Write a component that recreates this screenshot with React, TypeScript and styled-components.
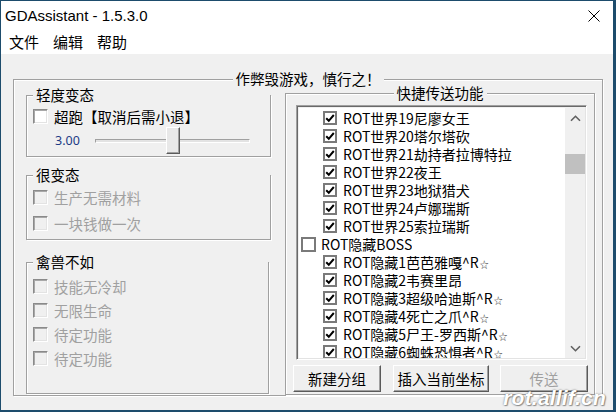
import React from 'react';
import styled, { createGlobalStyle } from 'styled-components';

const Global = createGlobalStyle`
  html, body { margin: 0; padding: 0; background: #1d4c6c; }
  body {
    width: 616px; height: 412px; overflow: hidden;
    font-family: "Noto Sans CJK SC", "Noto Sans", sans-serif;
    -webkit-font-smoothing: antialiased;
  }
  * { box-sizing: border-box; }
`;

const Frame = styled.div`
  position: relative;
  width: 616px;
  height: 412px;
  padding: 1px 3px 2px 1px;
  background: #1d4c6c;
  display: flex;
`;

const Win = styled.div`
  flex: 1;
  display: flex;
  flex-direction: column;
  background: #f0f0f0;
`;

const TitleBar = styled.div`
  height: 29px;
  background: #fff;
  display: flex;
  align-items: center;
  padding-left: 4px;
  font-family: "Liberation Sans", "Noto Sans", sans-serif;
  font-size: 15px;
  color: #000;
`;

const TitleText = styled.span`
  flex: 1;
`;

const CloseIcon = styled.svg`
  width: 12px;
  height: 12px;
  margin-right: 13px;
`;

const MenuBar = styled.div`
  height: 24px;
  background: #fff;
  display: flex;
  align-items: center;
  padding-left: 1px;
`;

const MenuItem = styled.span`
  padding: 0 7px;
  font-size: 15px;
  line-height: 24px;
  color: #000;
`;

const Client = styled.div`
  flex: 1;
  padding: 25px 0 0 12px;
`;

const Group = styled.div<{ $w: number; $h: number; $mt?: number }>`
  width: ${p => p.$w}px;
  height: ${p => p.$h}px;
  margin-top: ${p => p.$mt ?? 0}px;
  border: 1px solid #a0a0a0;
  box-shadow: 1px 1px 0 #fff, inset 1px 1px 0 #fff;
  display: flex;
  flex-direction: column;
  flex: none;
`;

const Legend = styled.div<{ $center?: boolean }>`
  margin-top: -10px;
  margin-left: ${p => (p.$center ? 'auto' : '6px')};
  margin-right: ${p => (p.$center ? 'auto' : '0')};
  padding: 0 3px;
  height: 18px;
  line-height: 18px;
  font-size: 14.5px;
  background: #f0f0f0;
  color: #000;
  white-space: nowrap;
`;

const OuterRow = styled.div`
  display: flex;
  gap: 14px;
  margin-top: 5px;
  padding-left: 12px;
`;

const LeftCol = styled.div`
  display: flex;
  flex-direction: column;
  padding-top: 2px;
`;

const CheckRow = styled.div<{ $h: number; $disabled?: boolean }>`
  height: ${p => p.$h}px;
  display: flex;
  align-items: center;
  gap: 6px;
  padding-left: 6px;
  font-size: 14.5px;
  color: ${p => (p.$disabled ? '#a0a0a0' : '#000')};
  white-space: nowrap;
`;

const Rows = styled.div<{ $pt: number }>`
  padding-top: ${p => p.$pt}px;
  display: flex;
  flex-direction: column;
`;

const ClassicBox = styled.span<{ $disabled?: boolean }>`
  width: 15px;
  height: 15px;
  flex: none;
  border: 1px solid;
  border-color: #8a8a8a #ffffff #ffffff #8a8a8a;
  box-shadow: inset 1px 1px 0 #a8a8a8, inset -1px -1px 0 #e3e3e3;
  background: ${p => (p.$disabled ? '#f0f0f0' : '#fff')};
`;

const SliderRow = styled.div`
  height: 27px;
  margin-top: 1px;
  display: flex;
  align-items: center;
  padding-left: 28px;
`;

const SliderValue = styled.span`
  width: 40px;
  font-family: "Noto Sans", sans-serif;
  font-size: 12.5px;
  color: #1c3b86;
`;

const SliderBox = styled.div`
  position: relative;
  width: 155px;
  height: 27px;
  display: flex;
  align-items: center;
`;

const Track = styled.div`
  width: 100%;
  height: 4px;
  border: 1px solid;
  border-color: #a0a0a0 #ffffff #ffffff #a0a0a0;
  background: #e3e3e3;
`;

const Thumb = styled.div`
  position: absolute;
  top: 0;
  width: 14px;
  height: 27px;
  background: #e8e8e8;
  border: 1px solid;
  border-color: #ffffff #5a5a5a #5a5a5a #ffffff;
  box-shadow: inset -1px -1px 0 #a0a0a0;
`;

const RightBody = styled.div`
  display: flex;
  flex-direction: column;
`;

const ListBox = styled.div`
  width: 291px;
  height: 255px;
  margin: 3px 0 0 10px;
  border: 1px solid;
  border-color: #a0a0a0 #ffffff #ffffff #a0a0a0;
  box-shadow: inset 1px 1px 0 #696969, inset -1px -1px 0 #e3e3e3;
  padding: 2px 1px 1px 2px;
  display: flex;
  overflow: hidden;
`;

const TreeArea = styled.div`
  flex: 1;
  background: #fff;
  overflow: hidden;
  padding-top: 1px;
`;

const TreeRow = styled.div<{ $child?: boolean }>`
  height: 18px;
  display: flex;
  align-items: center;
  gap: ${p => (p.$child ? 6 : 5)}px;
  padding-left: ${p => (p.$child ? 24 : 2)}px;
  font-size: 14px;
  line-height: 18px;
  color: #000;
  white-space: nowrap;
`;

const TreeLabel = styled.span`
  display: inline-block;
  height: 18px;
  line-height: 18px;
  overflow: hidden;
`;

const TreeBox = styled.span<{ $big?: boolean }>`
  width: ${p => (p.$big ? 15 : 14)}px;
  height: ${p => (p.$big ? 15 : 14)}px;
  flex: none;
  border: 2px solid #7a7a7a;
  background: #fff;
  display: inline-flex;
  align-items: center;
  justify-content: center;
`;

const Star = styled.span`
  font-size: 9px;
  color: #333;
  margin-left: 1px;
`;

const ScrollBar = styled.div`
  width: 20px;
  background: #f0f0f0;
  display: flex;
  flex-direction: column;
`;

const ScrollBtn = styled.div`
  height: 20px;
  display: flex;
  align-items: center;
  justify-content: center;
`;

const ScrollTrack = styled.div`
  flex: 1;
  padding-top: 26px;
`;

const ScrollThumb = styled.div`
  height: 20px;
  background: #c0c0c0;
`;

const ButtonRow = styled.div`
  display: flex;
  margin: 5px 0 0 7px;
`;

const Btn = styled.button<{ $w: number; $ml?: number }>`
  width: ${p => p.$w}px;
  height: 27px;
  margin-left: ${p => p.$ml ?? 0}px;
  padding: 0;
  font-family: "Noto Sans CJK SC", sans-serif;
  font-size: 14.5px;
  color: #000;
  background: #efefef;
  border: 1px solid;
  border-color: #ffffff #5a5a5a #5a5a5a #ffffff;
  box-shadow: inset -1px -1px 0 #a0a0a0;
  &:disabled { color: #a0a0a0; }
`;

const Watermark = styled.div`
  position: absolute;
  right: 10px;
  bottom: 2px;
  font-family: "Liberation Sans", sans-serif;
  font-weight: bold;
  font-style: italic;
  font-size: 21px;
  letter-spacing: 0.2px;
  color: #fff;
  text-shadow: 0 0 2px rgba(60, 60, 60, 0.7), 1px 1px 1px rgba(0, 0, 0, 0.35);
`;

const Check = () => (
  <svg width="10" height="10" viewBox="0 0 10 10">
    <path d="M1.2 5.2 L3.8 7.8 L8.8 2" stroke="#000" strokeWidth="2" fill="none" />
  </svg>
);

const Chevron = ({ down }: { down?: boolean }) => (
  <svg width="11" height="7" viewBox="0 0 11 7">
    <path d={down ? 'M1 1.2 L5.5 5.7 L10 1.2' : 'M1 5.8 L5.5 1.3 L10 5.8'} stroke="#606060" strokeWidth="1.6" fill="none" />
  </svg>
);

const world = [
  'ROT世界19尼廖女王',
  'ROT世界20塔尔塔砍',
  'ROT世界21劫持者拉博特拉',
  'ROT世界22夜王',
  'ROT世界23地狱猎犬',
  'ROT世界24卢娜瑞斯',
  'ROT世界25索拉瑞斯',
];

const hidden: { t: string; r?: boolean }[] = [
  { t: 'ROT隐藏1芭芭雅嘎', r: true },
  { t: 'ROT隐藏2韦赛里昂' },
  { t: 'ROT隐藏3超级哈迪斯', r: true },
  { t: 'ROT隐藏4死亡之爪', r: true },
  { t: 'ROT隐藏5尸王-罗西斯', r: true },
  { t: 'ROT隐藏6蜘蛛恐惧者', r: true },
];

export default function App() {
  const sliderPos = 0.46;
  return (
    <>
      <Global />
      <Frame>
        <Win>
          <TitleBar>
            <TitleText>GDAssistant - 1.5.3.0</TitleText>
            <CloseIcon viewBox="0 0 12 12">
              <path d="M0.5 0.5 L11.5 11.5 M11.5 0.5 L0.5 11.5" stroke="#000" strokeWidth="1" />
            </CloseIcon>
          </TitleBar>
          <MenuBar>
            <MenuItem>文件</MenuItem>
            <MenuItem>编辑</MenuItem>
            <MenuItem>帮助</MenuItem>
          </MenuBar>
          <Client>
            <Group $w={590} $h={317}>
              <Legend $center>作弊毁游戏，慎行之！</Legend>
              <OuterRow>
                <LeftCol>
                  <Group $w={245} $h={62}>
                    <Legend>轻度变态</Legend>
                    <Rows $pt={2}>
                      <CheckRow $h={20}>
                        <ClassicBox />
                        超跑【取消后需小退】
                      </CheckRow>
                    </Rows>
                    <SliderRow>
                      <SliderValue>3.00</SliderValue>
                      <SliderBox>
                        <Track />
                        <Thumb style={{ left: `${sliderPos * 155}px` }} />
                      </SliderBox>
                    </SliderRow>
                  </Group>
                  <Group $w={245} $h={65} $mt={18}>
                    <Legend>很变态</Legend>
                    <Rows $pt={0}>
                      <CheckRow $h={26} $disabled>
                        <ClassicBox $disabled />
                        生产无需材料
                      </CheckRow>
                      <CheckRow $h={26} $disabled>
                        <ClassicBox $disabled />
                        一块钱做一次
                      </CheckRow>
                    </Rows>
                  </Group>
                  <Group $w={243} $h={132} $mt={22}>
                    <Legend>禽兽不如</Legend>
                    <Rows $pt={3}>
                      {['技能无冷却', '无限生命', '待定功能', '待定功能'].map((t, i) => (
                        <CheckRow key={i} $h={24} $disabled>
                          <ClassicBox $disabled />
                          {t}
                        </CheckRow>
                      ))}
                    </Rows>
                  </Group>
                </LeftCol>
                <Group $w={310} $h={302}>
                  <Legend $center>快捷传送功能</Legend>
                  <RightBody>
                    <ListBox>
                      <TreeArea>
                        {world.map(t => (
                          <TreeRow key={t} $child>
                            <TreeBox><Check /></TreeBox>
                            <TreeLabel>{t}</TreeLabel>
                          </TreeRow>
                        ))}
                        <TreeRow>
                          <TreeBox $big />
                          <TreeLabel>ROT隐藏BOSS</TreeLabel>
                        </TreeRow>
                        {hidden.map(h => (
                          <TreeRow key={h.t} $child>
                            <TreeBox><Check /></TreeBox>
                            <TreeLabel>
                              {h.t}
                              {h.r && (
                                <>
                                  ^R<Star>☆</Star>
                                </>
                              )}
                            </TreeLabel>
                          </TreeRow>
                        ))}
                      </TreeArea>
                      <ScrollBar>
                        <ScrollBtn><Chevron /></ScrollBtn>
                        <ScrollTrack><ScrollThumb /></ScrollTrack>
                        <ScrollBtn><Chevron down /></ScrollBtn>
                      </ScrollBar>
                    </ListBox>
                    <ButtonRow>
                      <Btn $w={88}>新建分组</Btn>
                      <Btn $w={96} $ml={12}>插入当前坐标</Btn>
                      <Btn $w={88} $ml={11} disabled>传送</Btn>
                    </ButtonRow>
                  </RightBody>
                </Group>
              </OuterRow>
            </Group>
          </Client>
        </Win>
        <Watermark>rot.allif.cn</Watermark>
      </Frame>
    </>
  );
}
